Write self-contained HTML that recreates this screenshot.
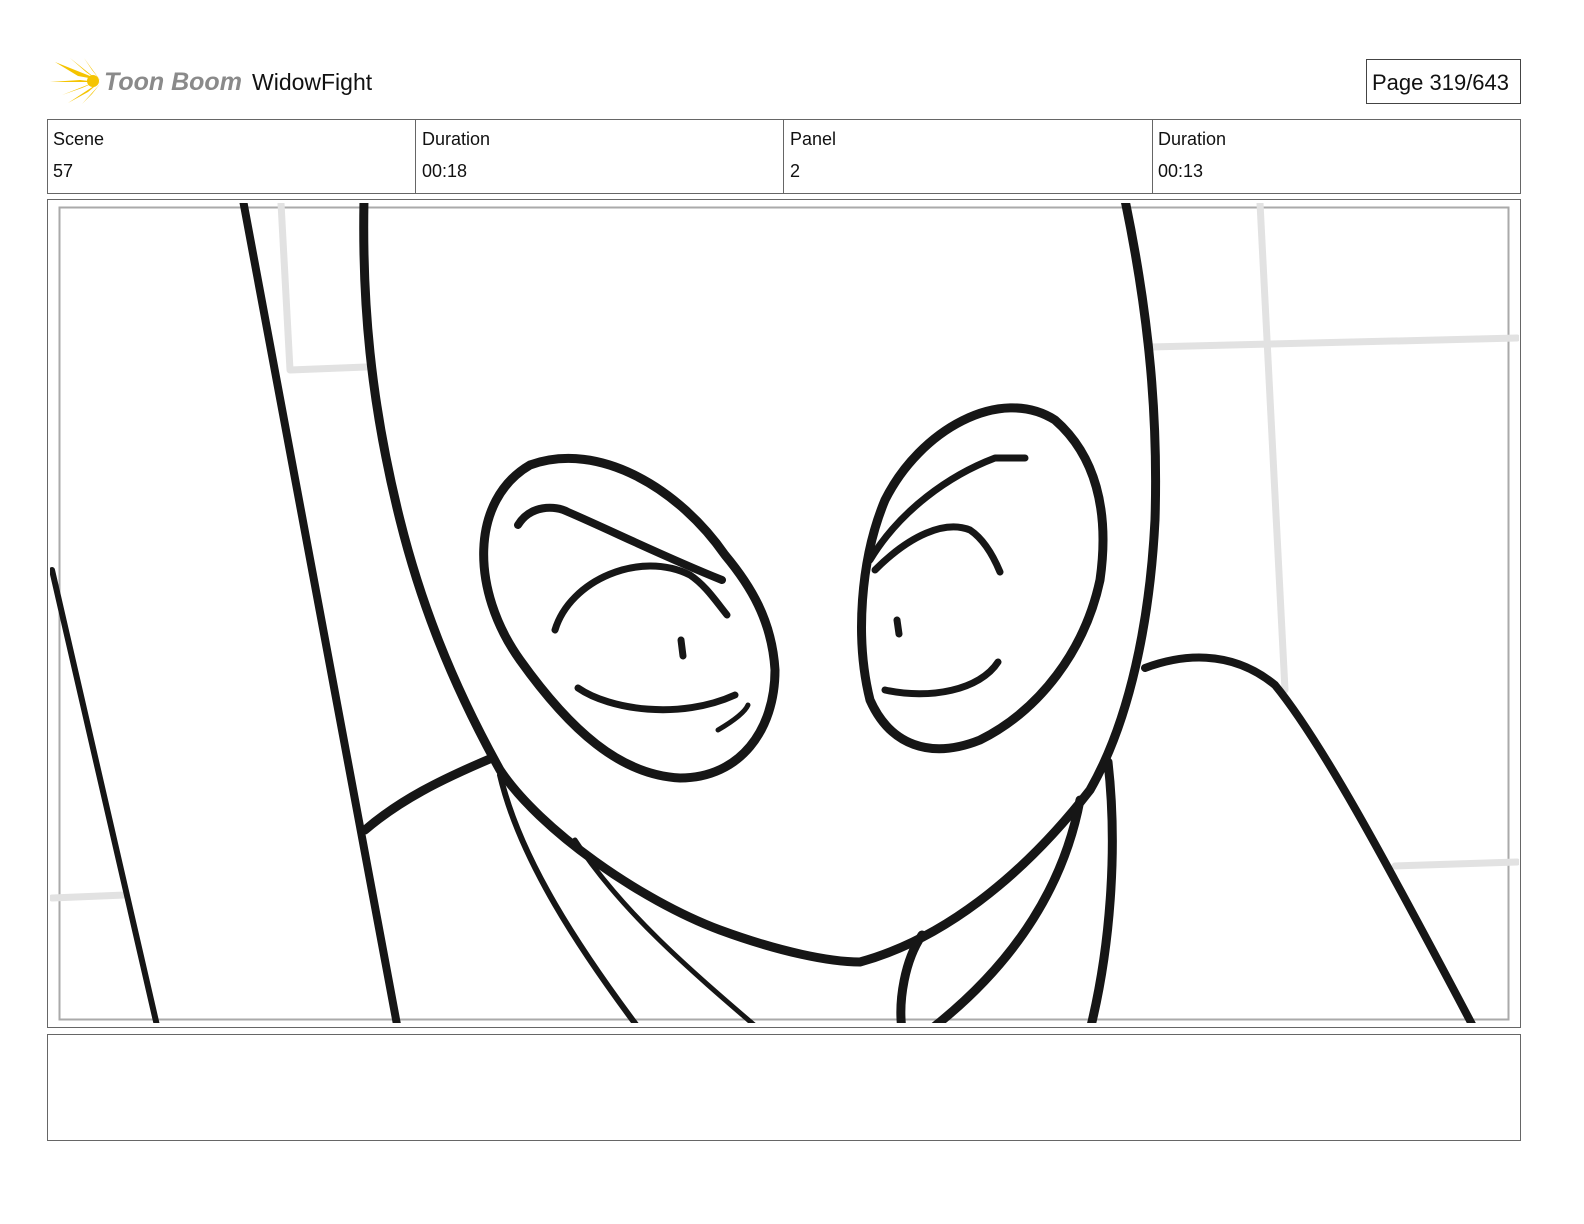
<!DOCTYPE html>
<html><head><meta charset="utf-8"><style>
html,body{margin:0;padding:0;background:#fff;}
body{width:1584px;height:1224px;position:relative;overflow:hidden;font-family:"Liberation Sans",sans-serif;}
.t{position:absolute;color:#111;}
</style></head><body>
<svg width="1584" height="1224" style="position:absolute;left:0;top:0" xmlns="http://www.w3.org/2000/svg">
<!-- logo burst -->
<g fill="#f5c400">
<polygon points="100,80 55,62 78,76"/>
<polygon points="100,80 62,95 82,88"/>
<polygon points="100,82 70,58 86,72"/>
<polygon points="100,82 68,103 88,92"/>
<polygon points="98,82 50,82 80,80"/>
<polygon points="100,80 84,58 92,70"/>
<polygon points="100,84 82,104 92,94"/>
<circle cx="93" cy="81" r="6"/>
</g>
<text x="104" y="90" font-family="Liberation Sans" font-weight="bold" font-style="italic" font-size="25" fill="#8a8a8a">Toon Boom</text>
<text x="252" y="90" font-family="Liberation Sans" font-size="23" fill="#111">WidowFight</text>
<rect x="1366.5" y="59.5" width="154" height="44" fill="none" stroke="#444"/>
<text x="1372" y="90" font-family="Liberation Sans" font-size="22" fill="#111">Page 319/643</text>
<!-- header table -->
<rect x="47.5" y="119.5" width="1473" height="74" fill="none" stroke="#666"/>
<line x1="415.5" y1="119" x2="415.5" y2="194" stroke="#666"/>
<line x1="783.5" y1="119" x2="783.5" y2="194" stroke="#666"/>
<line x1="1152.5" y1="119" x2="1152.5" y2="194" stroke="#666"/>
<g font-family="Liberation Sans" font-size="18" fill="#111">
<text x="53" y="145">Scene</text><text x="53" y="177">57</text>
<text x="422" y="145">Duration</text><text x="422" y="177">00:18</text>
<text x="790" y="145">Panel</text><text x="790" y="177">2</text>
<text x="1158" y="145">Duration</text><text x="1158" y="177">00:13</text>
</g>
<!-- panel -->
<rect x="47.5" y="199.5" width="1473" height="828" fill="none" stroke="#666"/>
<rect x="59.5" y="207.5" width="1449" height="812" fill="none" stroke="#aaa" stroke-width="2"/>
<rect x="47.5" y="1034.5" width="1473" height="106" fill="none" stroke="#666"/>
<defs><clipPath id="c"><rect x="50" y="203" width="1469" height="820"/></clipPath></defs>
<g clip-path="url(#c)" fill="none" stroke-linecap="round" stroke-linejoin="round">
<g stroke="#e2e2e2" stroke-width="7">
<path d="M281,203 L290,370 L366,367"/>
<path d="M1150,347 L1517,338"/>
<path d="M1260,203 L1285,690"/>
<path d="M1395,866 L1517,862"/>
<path d="M52,898 L125,895"/>
</g>
<g stroke="#161616" stroke-width="9">
<path d="M52,570 L158,1030" stroke-width="6"/>
<path d="M243,200 L398,1030" stroke-width="8"/>
<path d="M364,200 C362,300 370,400 400,520 C420,600 450,680 500,770 C540,830 640,900 720,930 C780,952 830,962 860,962 C940,940 1020,880 1090,790 C1130,720 1150,620 1155,520 C1158,420 1150,320 1125,200"/>
<path d="M365,830 C400,800 440,780 492,758"/>
<path d="M1145,668 C1180,655 1230,648 1275,685 C1320,740 1380,850 1475,1030" stroke-width="8"/>
<path d="M500,775 C520,860 580,950 640,1030" stroke-width="6"/>
<path d="M575,840 C620,910 690,970 760,1030" stroke-width="5"/>
<path d="M1108,762 C1118,850 1110,950 1090,1030"/>
<path d="M1080,800 C1065,880 1020,960 930,1030"/>
<path d="M922,935 C905,960 898,1000 902,1030"/>
<!-- left eye -->
<path d="M725,555 C680,490 600,440 530,465 C470,500 470,590 520,660 C570,730 620,775 680,778 C740,778 775,730 775,670 C772,620 750,585 725,555 Z"/>
<path d="M518,525 C530,505 555,505 568,512 C610,530 660,555 722,580" stroke-width="8"/>
<path d="M555,630 C570,580 640,550 690,575 C705,585 715,600 727,615" stroke-width="7"/>
<path d="M578,688 C610,710 680,720 735,695" stroke-width="7"/>
<path d="M718,730 C735,720 745,712 748,705" stroke-width="5"/>
<path d="M681,640 L683,656" stroke-width="7"/>
<!-- right eye -->
<path d="M1055,420 C1000,385 920,430 885,500 C860,560 855,640 870,700 C890,745 930,760 980,740 C1040,710 1085,650 1100,580 C1110,510 1095,455 1055,420 Z"/>
<path d="M870,560 C900,510 950,475 995,458 L1025,458" stroke-width="7"/>
<path d="M875,570 C910,535 945,520 970,530 C985,540 995,560 1000,572" stroke-width="7"/>
<path d="M885,690 C930,700 980,690 998,662" stroke-width="7"/>
<path d="M897,620 L899,634" stroke-width="7"/>
</g>
</g>
</svg>
</body></html>
